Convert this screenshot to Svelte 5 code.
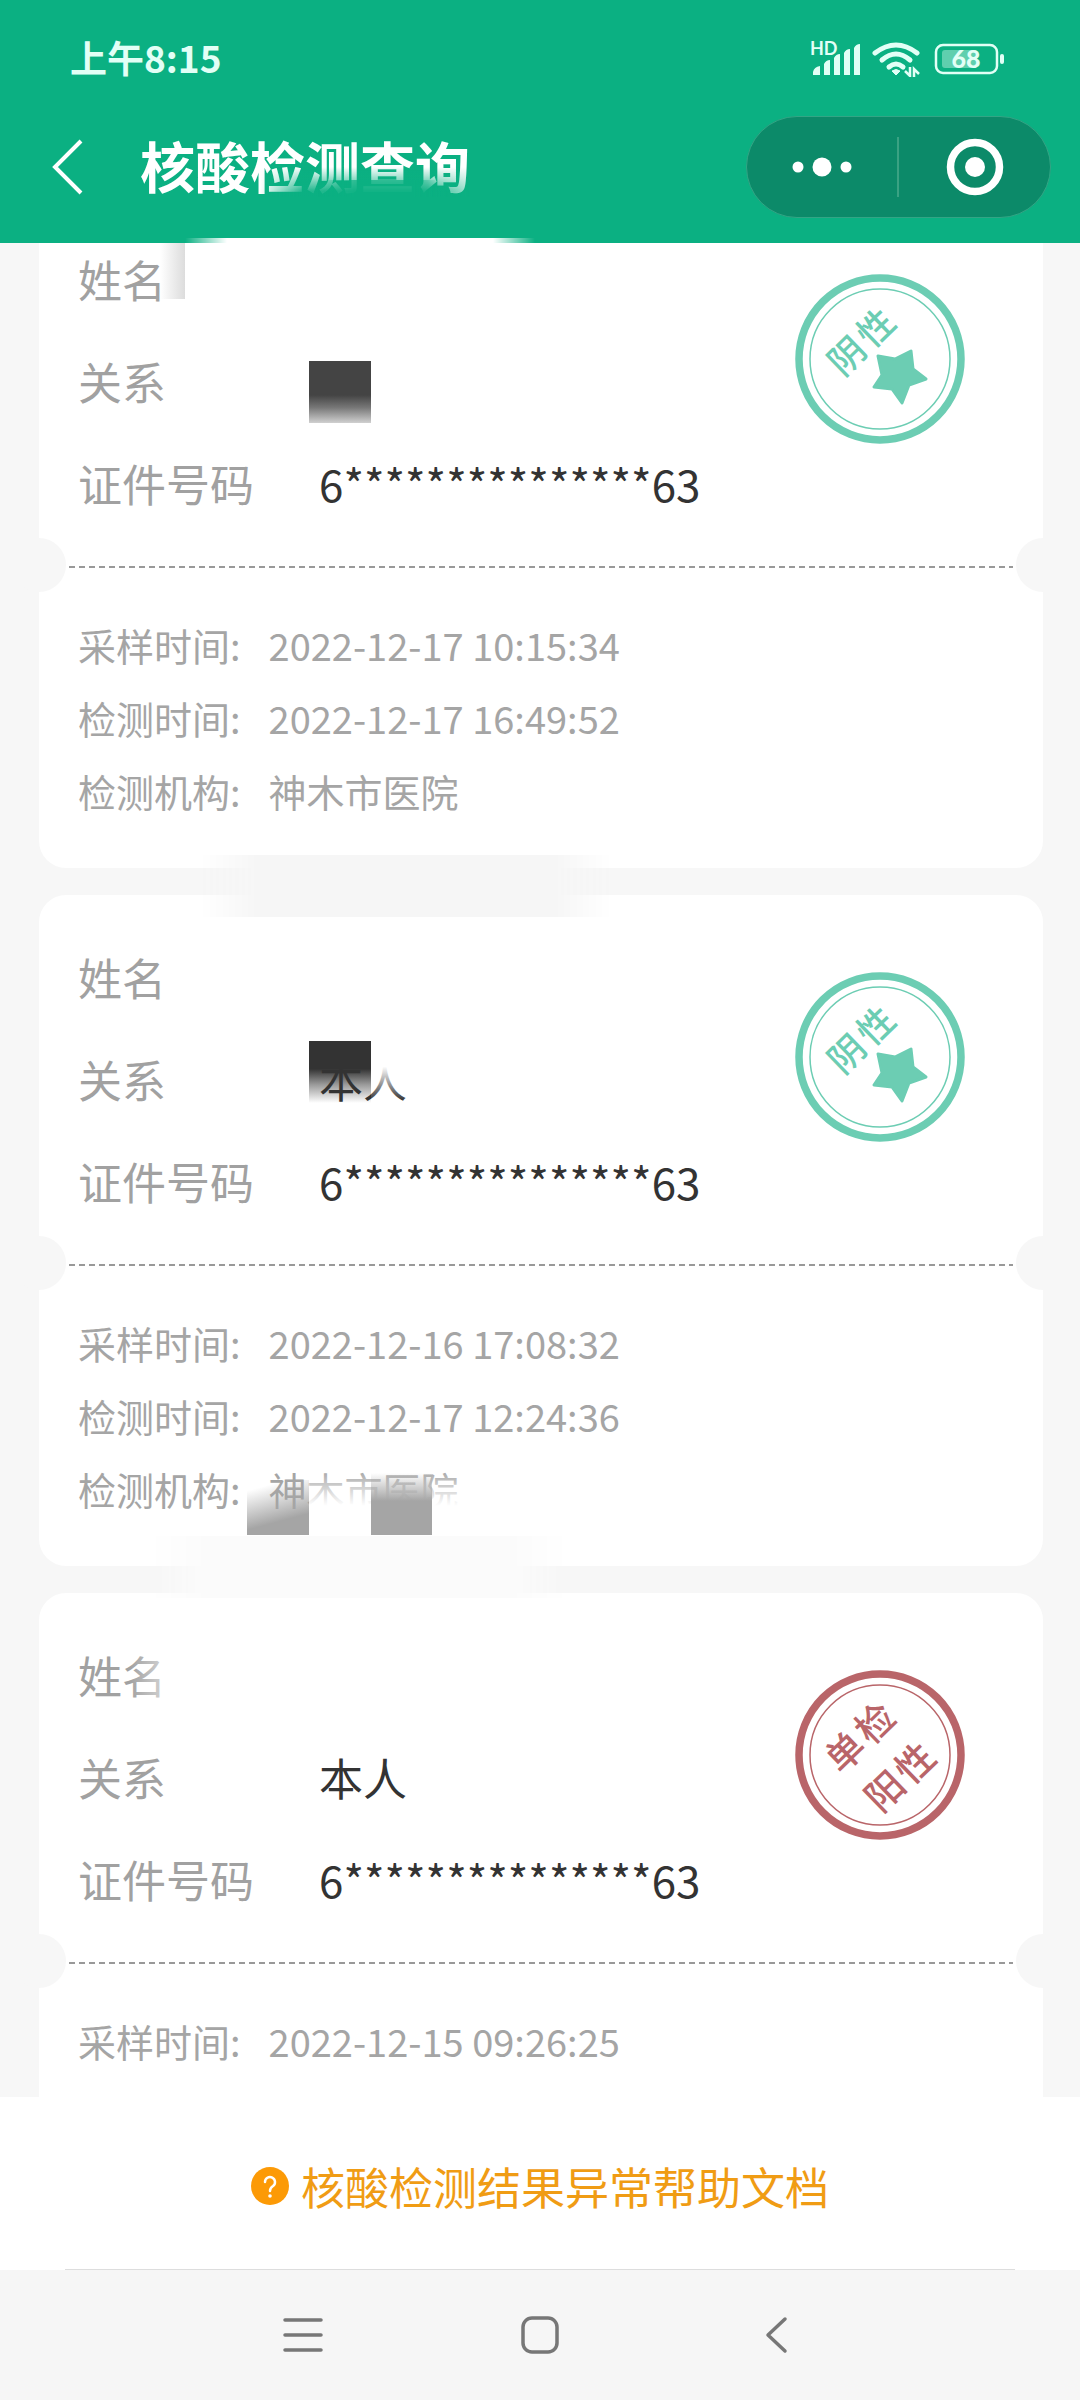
<script>
  const records = [
    {
      relation: "",
      idNumber: "6***************63",
      result: "negative",
      details: [
        { label: "采样时间:", value: "2022-12-17 10:15:34" },
        { label: "检测时间:", value: "2022-12-17 16:49:52" },
        { label: "检测机构:", value: "神木市医院" },
      ],
      smudges: ["name-edge", "relation-full", "gap-grey"],
    },
    {
      relation: "本人",
      idNumber: "6***************63",
      result: "negative",
      details: [
        { label: "采样时间:", value: "2022-12-16 17:08:32" },
        { label: "检测时间:", value: "2022-12-17 12:24:36" },
        { label: "检测机构:", value: "神木市医院" },
      ],
      smudges: [
        "relation-half",
        "relation-fade",
        "org-left",
        "org-fade",
        "org-right",
        "gap-light",
      ],
    },
    {
      relation: "本人",
      idNumber: "6***************63",
      result: "positive",
      details: [{ label: "采样时间:", value: "2022-12-15 09:26:25" }],
      smudges: ["name-fade"],
    },
  ];
</script>

<div class="phone">
  <header>
    <div class="status">
      <span class="clock">上午8:15</span>
      <svg class="status-icons" viewBox="0 0 196 40" aria-hidden="true">
        <text class="hd" x="0" y="18">HD</text>
        <g fill="#e2fff6">
          <path d="M3 38v-3q1-5 7-6v9zM14 38V27q2-4 6-4v15zM24 38V21q2-4 6-4v21zM34 38V16q2-4 6-4v26zM44 38V11q2-4 6-4v31z" />
        </g>
        <g fill="none" stroke="#e2fff6" stroke-width="5" stroke-linecap="round">
          <path d="M65 16q21 -16 42 0" />
          <path d="M72 23q14 -12 28 0" />
          <path d="M79 30q7 -6 14 0" />
        </g>
        <path d="M82 34q4 -3 8 0l-4 4z" fill="#e2fff6" stroke="#e2fff6" stroke-width="1" />
        <path d="M100 30v9l-5-5M104 41v-9l5 5" fill="none" stroke="#e2fff6" stroke-width="2.500" />
        <rect x="126" y="8" width="61" height="28" rx="7" fill="none" stroke="#e2fff6" stroke-width="2.500" />
        <rect x="132" y="13" width="35" height="18" rx="3" fill="#5fcfae" />
        <text class="percent" x="156" y="31" text-anchor="middle">68</text>
        <rect x="190" y="17" width="4" height="10" rx="2" fill="#e2fff6" />
      </svg>
    </div>
    <div class="title-bar">
      <button class="back" aria-label="返回">
        <svg width="34" height="60" viewBox="0 0 34 60">
          <path d="M30 4L4 30l26 26" fill="none" stroke="#fff" stroke-width="4" />
        </svg>
      </button>
      <h1>核酸检测查询</h1>
      <div class="capsule">
        <button aria-label="更多">
          <svg width="64" height="60" viewBox="0 0 64 60" fill="#fff">
            <circle cx="8" cy="30" r="5.500" />
            <circle cx="32" cy="30" r="9.500" />
            <circle cx="56" cy="30" r="5.500" />
          </svg>
        </button>
        <button aria-label="关闭">
          <svg width="60" height="60" viewBox="0 0 60 60">
            <circle cx="30" cy="30" r="24.500" fill="none" stroke="#fff" stroke-width="7.500" />
            <circle cx="30" cy="30" r="10" fill="#fff" />
          </svg>
        </button>
      </div>
    </div>
    <i class="bleed"></i>
  </header>

  <main>
    {#each records as record}
      <article class="card">
        <dl class="person">
          <div><dt>姓名</dt><dd></dd></div>
          <div><dt>关系</dt><dd class="relation">{record.relation}</dd></div>
          <div><dt>证件号码</dt><dd>{record.idNumber}</dd></div>
        </dl>

        <svg class="stamp {record.result}" viewBox="0 0 170 170">
          <circle cx="85" cy="85" r="81" fill="none" stroke="currentColor" stroke-width="7.500" />
          <circle cx="85" cy="85" r="70" fill="none" stroke="currentColor" stroke-width="1.500" />
          {#if record.result === "negative"}
            <g font-size="36">
              <text transform="translate(52 82) rotate(-44)" y="13">阴</text>
              <text transform="translate(81 54) rotate(-44)" y="13">性</text>
            </g>
            <path
              d="M116 77l2 18 13 10-17 6-7 18-10-14-18-2 8-12-4-19 17 3z"
              stroke="currentColor"
              stroke-width="3"
              stroke-linejoin="round"
            />
          {:else}
            <g font-size="38">
              <text transform="translate(50 82) rotate(-44)" y="14">单</text>
              <text transform="translate(80 53) rotate(-44)" y="14">检</text>
              <text transform="translate(90 121) rotate(-44)" y="14">阳</text>
              <text transform="translate(120 93) rotate(-44)" y="14">性</text>
            </g>
          {/if}
        </svg>

        <div class="tear"></div>

        <dl class="details">
          {#each record.details as detail}
            <div><dt>{detail.label}</dt><dd>{detail.value}</dd></div>
          {/each}
        </dl>

        {#each record.smudges as smudge}
          <i class="smudge {smudge}"></i>
        {/each}
      </article>
    {/each}
  </main>

  <footer>
    <a href="#help">
      <svg width="38" height="38" viewBox="0 0 38 38" aria-hidden="true">
        <circle cx="19" cy="19" r="19" fill="#fc9a06" />
        <path d="M14 15a5 5 0 1 1 8 4q-3 2-3 5" fill="none" stroke="#fff" stroke-width="2.500" stroke-linecap="round" />
        <circle cx="19" cy="29" r="1.800" fill="#fff" />
      </svg>
      核酸检测结果异常帮助文档
    </a>
  </footer>

  <nav>
    <button aria-label="菜单">
      <svg width="44" height="44" viewBox="0 0 44 44">
        <path d="M4 7h36M4 22h36M4 37h36" />
      </svg>
    </button>
    <button aria-label="主页">
      <svg width="44" height="44" viewBox="0 0 44 44">
        <rect x="5" y="5" width="34" height="34" rx="9" />
      </svg>
    </button>
    <button aria-label="后退">
      <svg width="44" height="44" viewBox="0 0 44 44">
        <path d="M30 6L13 22l17 16" />
      </svg>
    </button>
  </nav>
</div>

<style>
  :global(body) {
    margin: 0;
  }

  .phone {
    display: flex;
    flex-direction: column;
    height: 100vh;
    background: #f7f7f7;
    font-family: "Noto Sans CJK SC", sans-serif;
  }

  button {
    display: flex;
    align-items: center;
    justify-content: center;
    padding: 0;
    border: 0;
    background: none;
  }

  /* header */
  header {
    position: relative;
    z-index: 1;
    padding-bottom: 25px;
    background: #0bb082;
    color: #fff;
  }

  .status {
    display: flex;
    align-items: center;
    justify-content: space-between;
    height: 116px;
    padding: 0 74px 2px 70px;
    box-sizing: border-box;
  }

  .clock {
    font-size: 37px;
    font-weight: 700;
    color: #e2fff6;
  }

  .status-icons {
    width: 196px;
    height: 40px;
  }

  .hd {
    font: 700 18px Lato, sans-serif;
    fill: #e2fff6;
  }

  .percent {
    font: 900 25px Lato, sans-serif;
    fill: #e2fff6;
  }

  .title-bar {
    display: flex;
    align-items: center;
    height: 102px;
    padding: 0 29px 0 51px;
  }

  h1 {
    position: relative;
    margin: 0 auto 0 55px;
    padding-bottom: 6px;
    font-size: 55px;
    font-weight: 700;
    line-height: 72px;
  }

  h1::after {
    content: "";
    position: absolute;
    right: 0;
    bottom: 9px;
    width: 210px;
    height: 30px;
    background: linear-gradient(#0bb08200, #0bb082e6 80%);
    mask-image: linear-gradient(to right, transparent, #000 20%, #000 80%, #0006);
  }

  /* darker patch under 测查 */
  h1::before {
    content: "";
    position: absolute;
    z-index: 1;
    right: 32px;
    bottom: 9px;
    width: 120px;
    height: 17px;
    background: #0bb082b3;
    mask-image: linear-gradient(to right, transparent, #000 30%, #000 80%, transparent);
  }

  .capsule {
    display: flex;
    flex: none;
    width: 305px;
    height: 102px;
    box-sizing: border-box;
    border: 1px solid #33a585;
    border-radius: 51px;
    background: #0c8a69;
  }

  .capsule button {
    position: relative;
    flex: 1 1 0;
  }

  .capsule button + button {
    padding-left: 4px;
  }

  .capsule button + button::before {
    content: "";
    position: absolute;
    left: 0;
    width: 2px;
    height: 60px;
    background: #3aa283;
  }

  .bleed {
    position: absolute;
    left: 185px;
    bottom: 0;
    width: 350px;
    height: 5px;
    background: #fff;
    mask-image: linear-gradient(to right, transparent, #000 12%, #000 88%, transparent);
  }

  /* records */
  main {
    display: flex;
    flex-direction: column;
    flex: 1 1 0;
    gap: 27px;
    min-height: 0;
    margin-top: -46px;
    padding: 0 37px 0 39px;
    overflow: hidden;
  }

  .card {
    position: relative;
    flex: none;
    min-height: 671px;
    padding: 31px 39px;
    box-sizing: border-box;
    border-radius: 27px;
    background: #fff;
  }

  dl,
  dd {
    margin: 0;
  }

  .person div {
    display: flex;
    font-size: 44px;
    line-height: 102px;
  }

  .person dt {
    width: 241px;
    color: #a1a1a1;
  }

  .person dd {
    color: #333;
  }

  .relation {
    position: relative;
    z-index: 1;
  }

  .tear {
    height: 2px;
    margin: 32px -9px 40px;
    background: repeating-linear-gradient(to right, #999 0 6px, transparent 6px 10px);
  }

  .tear::before,
  .tear::after {
    content: "";
    position: absolute;
    top: 341px;
    left: -27px;
    width: 54px;
    height: 54px;
    border-radius: 50%;
    background: #f7f7f7;
  }

  .tear::after {
    right: -27px;
    left: auto;
  }

  .details div {
    display: flex;
    gap: 28px;
    font-size: 38px;
    line-height: 73px;
    color: #a5a5a5;
  }

  .stamp {
    position: absolute;
    top: 77px;
    right: 78px;
    width: 170px;
    height: 170px;
    fill: currentColor;
    font-weight: 500;
    text-anchor: middle;
  }

  .negative {
    color: #6ccdb3;
  }

  .positive {
    color: #b96569;
  }

  /* smears left by the eraser */
  .smudge {
    position: absolute;
  }

  .name-edge {
    left: 121px;
    top: 46px;
    width: 25px;
    height: 56px;
    background: linear-gradient(to right, #fff0, #dcdcdc);
  }

  .name-fade {
    left: 90px;
    top: 60px;
    width: 36px;
    height: 50px;
    background: linear-gradient(to right, #fff0, #fff8);
  }

  .relation-full,
  .relation-half {
    left: 270px;
    width: 62px;
    height: 62px;
  }

  .relation-full {
    top: 164px;
    background: linear-gradient(#444 55%, #777 75%, #d0d0d0);
  }

  .relation-half {
    top: 146px;
    background: linear-gradient(#333 45%, #999 70%, #fff);
  }

  .relation-fade {
    z-index: 2;
    left: 332px;
    top: 160px;
    width: 46px;
    height: 46px;
    background: linear-gradient(#fff 25%, #fff0);
  }

  .org-left {
    left: 208px;
    top: 585px;
    width: 62px;
    height: 55px;
    background: linear-gradient(165deg, #a5a5a500 15%, #a5a5a5 70%);
  }

  .org-fade {
    left: 270px;
    top: 575px;
    width: 160px;
    height: 48px;
    background: linear-gradient(#fff0, #fff 75%);
  }

  .org-right {
    left: 332px;
    top: 578px;
    width: 61px;
    height: 62px;
    background: linear-gradient(#a5a5a500, #a5a5a5 45%);
  }

  .gap-grey,
  .gap-light {
    z-index: 1;
    height: 62px;
    mask-image: linear-gradient(to right, transparent, #000 14%, #000 86%, transparent);
  }

  .gap-grey {
    left: 161px;
    top: 658px;
    width: 412px;
    background: #f6f6f6;
  }

  .gap-light {
    left: 110px;
    top: 641px;
    width: 420px;
    background: #fbfbfb;
  }

  /* help link */
  footer {
    display: flex;
    align-items: center;
    justify-content: center;
    height: 173px;
    background: linear-gradient(#ddd, #ddd) center bottom / calc(100% - 130px) 1px no-repeat #fff;
  }

  footer a {
    display: flex;
    align-items: center;
    gap: 12px;
    padding-top: 4px;
    font-size: 44px;
    line-height: 64px;
    color: #f09c14;
    text-decoration: none;
  }

  /* system navigation */
  nav {
    display: flex;
    align-items: center;
    justify-content: center;
    gap: 193px;
    height: 130px;
    background: #f6f6f6;
  }

  nav svg {
    fill: none;
    stroke: #777;
    stroke-width: 3.500;
    stroke-linecap: round;
    stroke-linejoin: round;
  }
</style>
